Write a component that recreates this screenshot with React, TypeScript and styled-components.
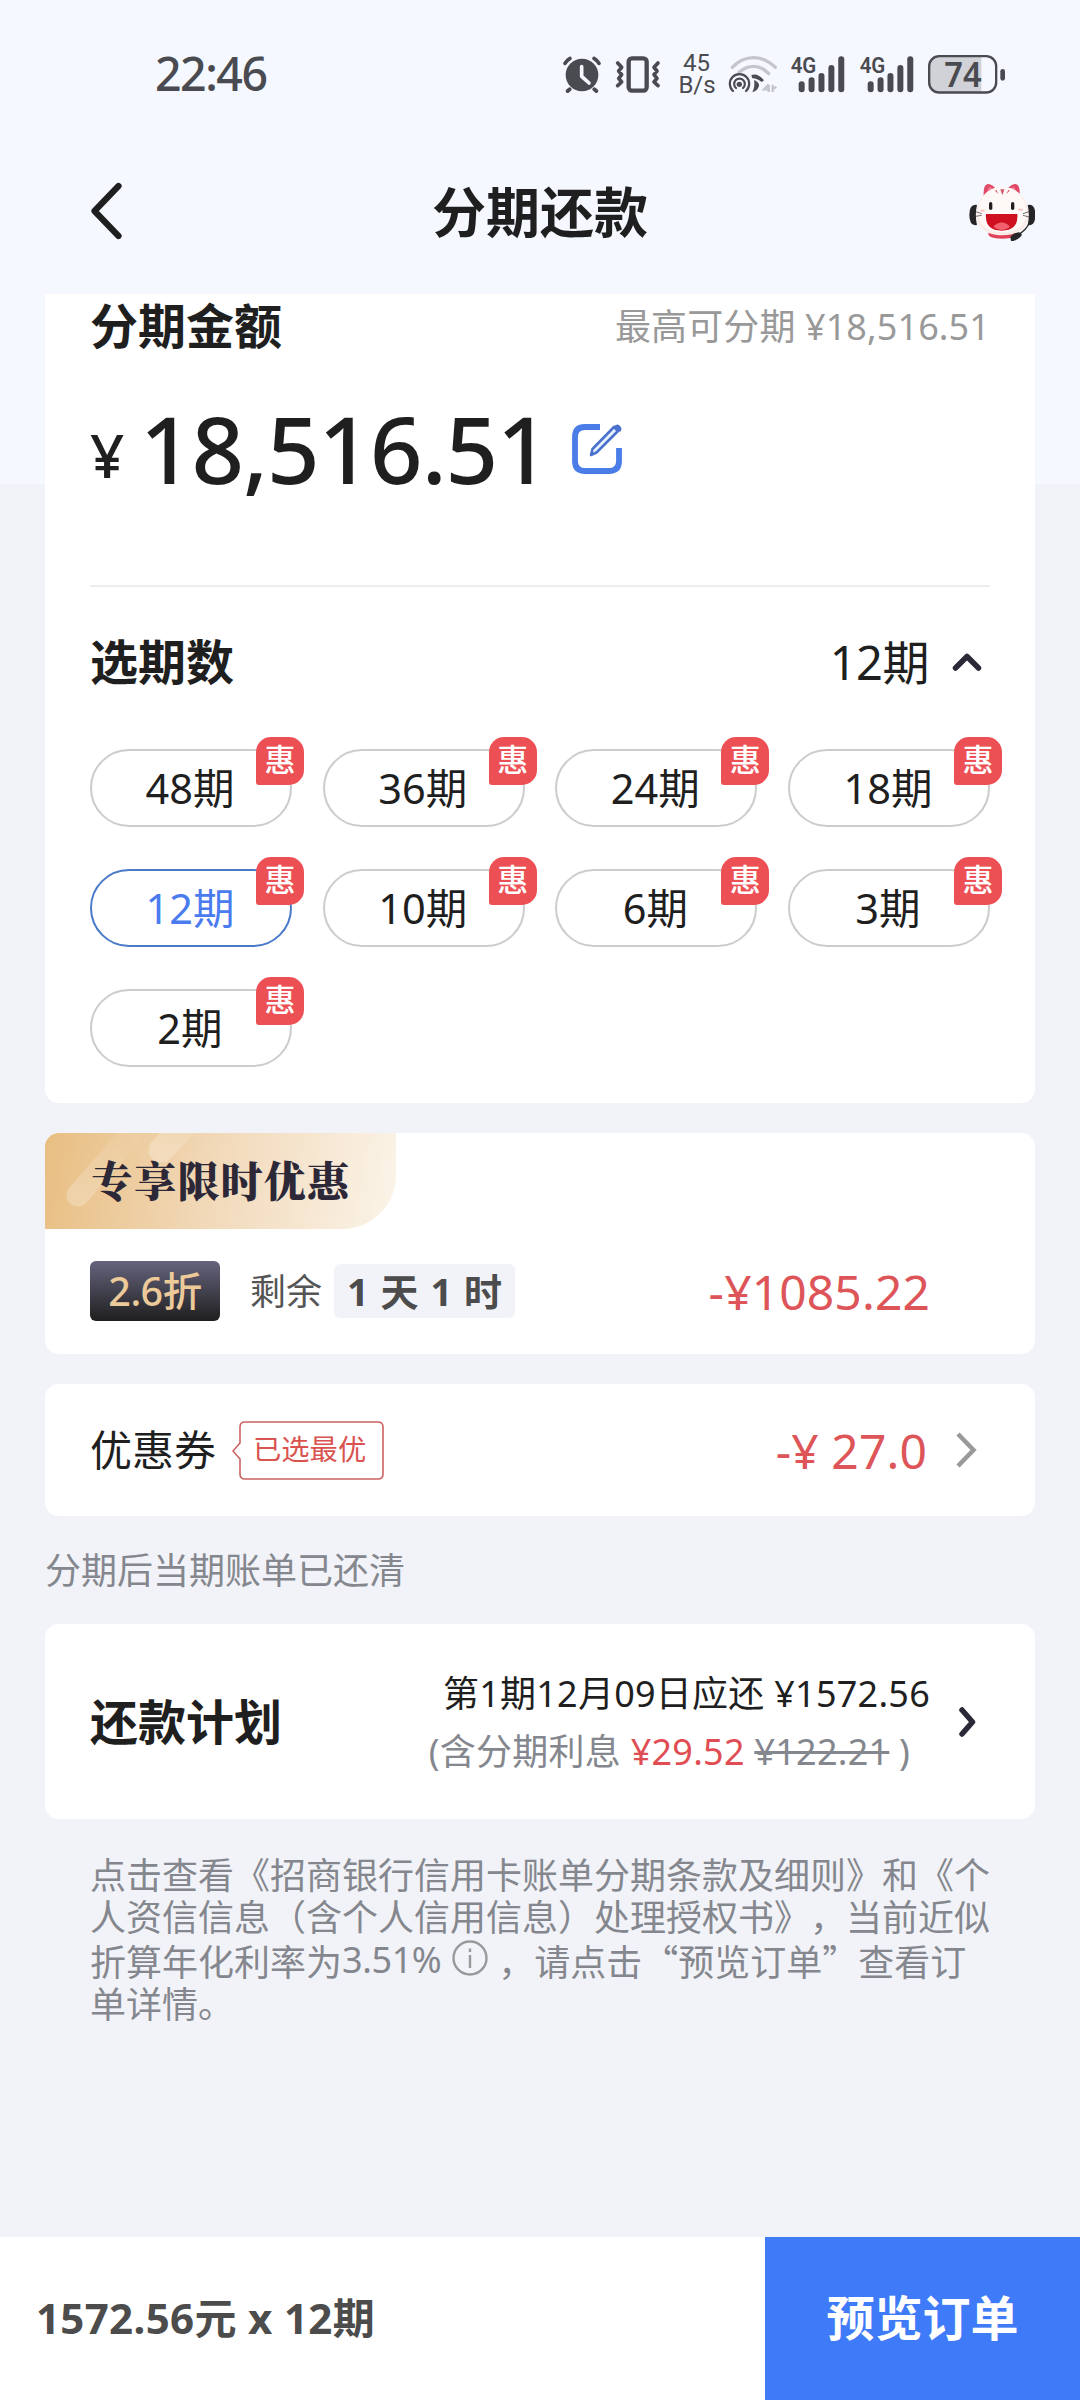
import React from "react";
import styled, { createGlobalStyle } from "styled-components";

const Global = createGlobalStyle`
  * { box-sizing: border-box; }
  body {
    margin: 0;
    font-family: "Noto Sans", "Noto Sans CJK SC", sans-serif;
    line-height: 1.25;
    color: #1f1f1f;
  }
`;

const Page = styled.div`
  width: 1080px;
  height: 2400px;
  display: flex;
  flex-direction: column;
  overflow: hidden;
  background: linear-gradient(#f5f8ff 0 484px, #f2f3f8 484px);
`;

/* ---------- status bar ---------- */

const StatusBar = styled.div`
  height: 148px;
  padding: 0 74px 0 155px;
  display: flex;
  align-items: center;
  justify-content: space-between;
  color: #4a4b50;
`;

const Clock = styled.span`
  padding-bottom: 2px;
  font-size: 46.500px;
  font-weight: 500;
  letter-spacing: -1.500px;
`;

const StatusIcons = styled.div`
  display: flex;
  align-items: center;
`;

const StatusSvg = styled.svg<{ $gap: number }>`
  display: block;
  overflow: visible;
  margin-left: ${(p) => p.$gap}px;
`;

const NetSpeed = styled.div`
  width: 36px;
  margin-left: 18px;
  font: 400 24px/22px Roboto, sans-serif;
  text-align: center;
  white-space: nowrap;
`;

const INK = "#4a4b50";

const Alarm = () => (
  <StatusSvg $gap={0} width="38" height="37" viewBox="68 74 114 111">
    <circle cx="125" cy="131" r="49" fill={INK} />
    <path d="M88 174l-6 5M162 174l6 5" stroke={INK} strokeWidth="12" strokeLinecap="round" />
    <path d="M74 96q5-9 15-15M176 96q-5-9-15-15" stroke={INK} strokeWidth="11" fill="none" strokeLinecap="round" />
    <path d="M124 106v29l22 20" stroke="#f5f8ff" strokeWidth="11" fill="none" strokeLinecap="round" strokeLinejoin="round" />
  </StatusSvg>
);

const Vibrate = () => (
  <StatusSvg $gap={15} width="44" height="37" viewBox="227 74 132 111">
    <rect x="265" y="81" width="54" height="97" rx="10" fill="none" stroke={INK} strokeWidth="13" />
    <path
      d="M232 95l12 13-9 11 9 11-9 11 9 11-12 11M353 95l-12 13 9 11-9 11 9 11-9 11 12 11"
      stroke={INK} strokeWidth="11" fill="none" strokeLinecap="round" strokeLinejoin="round"
    />
  </StatusSvg>
);

const Hotspot = () => (
  <StatusSvg $gap={14.5} width="48" height="37" viewBox="569 74 144 111">
    <g fill="none" strokeLinecap="round">
      <path d="M579 108q28-29 64-29t65 29" stroke="#c4c6cc" strokeWidth="10" />
      <path d="M599 123q20-18 44-18t45 22" stroke="#c4c6cc" strokeWidth="10" />
      <path d="M581 179a29 29 0 1 1 39 0" stroke={INK} strokeWidth="6.500" />
      <path d="M590 170a16 16 0 1 1 21 0" stroke={INK} strokeWidth="6.500" />
    </g>
    <circle cx="600" cy="159" r="8" fill={INK} />
    <path d="M636 131q20-6 38 16l-7 5q-16-12-28-11z" fill={INK} />
    <path d="M644 146q17 8 15 18-4 14-20 19 9-18 5-37z" fill={INK} />
    <path d="M688 160v22M688 160l-14 14h18M700 160v22M711 166l-11 8" stroke="#c4c6cc" strokeWidth="7" fill="none" />
  </StatusSvg>
);

const Signal = () => (
  <StatusSvg $gap={14.3} width="54" height="37" viewBox="757 74 162 111">
    {[150, 138, 125, 101, 75].map((top, i) => (
      <rect key={top} x={780 + i * 29.7} y={top} width="18" height={183 - top} rx="9" fill={INK} />
    ))}
    <text x="756" y="126" fontSize="68" fontWeight="600" fontFamily="Roboto" fill={INK} textLength="77" lengthAdjust="spacingAndGlyphs">
      4G
    </text>
  </StatusSvg>
);

const Battery = () => (
  <StatusSvg $gap={14.5} width="78" height="39" viewBox="1166 70 234 117">
    <path d="M1200 74h126v108h-126q-30 0-30-30v-48q0-30 30-30z" fill="#d0d2d8" />
    <rect x="1169.500" y="73.500" width="201" height="109" rx="30" fill="none" stroke={INK} strokeWidth="7" />
    <rect x="1383" y="112" width="14" height="35" rx="7" fill={INK} />
    <text x="1271" y="165" textAnchor="middle" fontSize="100" fontWeight="600" fontFamily="Noto Sans" fill={INK} textLength="112" lengthAdjust="spacingAndGlyphs">
      74
    </text>
  </StatusSvg>
);

/* ---------- title bar ---------- */

const TitleBar = styled.header`
  height: 128px;
  margin-bottom: 18px;
  padding: 0 45px 0 90px;
  display: grid;
  grid-template-columns: 66px 1fr 66px;
  align-items: center;
`;

const BackIcon = styled.svg`
  margin-bottom: 2px;
`;

const Title = styled.h1`
  margin: 0;
  padding-right: 45px;
  font-size: 54px;
  font-weight: 700;
  line-height: 70px;
  text-align: center;
`;

const Mascot = () => (
  <svg width="66" height="58" viewBox="0 0 198 174">
    <path d="M44 38q-2-32 12-35 12-2 28 18zM152 38q2-32-12-35-12-2-28 18z" fill="#e04a66" />
    <path d="M54 34q2-20 8-22 6 0 12 12zM142 34q-2-20-8-22-6 0-12 12z" fill="#f27a90" />
    <path d="M58 150h84q2 17-42 17t-42-17z" fill="#e04058" />
    <path d="M100 12c48 0 77 38 79 82 2 40-32 63-79 63s-79-23-77-63c2-44 29-82 77-82z" fill="#fbece8" />
    <path d="M100 12c46 0 70 36 72 76 2 38-30 60-72 60s-74-22-72-60c2-40 26-76 72-76z" fill="#fef8f6" />
    <path d="M94 19h12l-6 18zM78 23l4-2 6 12zM122 23l-4-2-6 12z" fill="#d65067" />
    <rect x="60" y="57" width="10" height="24" rx="5" fill="#221f20" />
    <rect x="126" y="57" width="10" height="24" rx="5" fill="#221f20" />
    <path d="M51 93h94q4 50-47 50T51 93z" fill="#cf1020" />
    <path d="M73 131q25-25 50 0-25 21-50 0z" fill="#f4606e" />
    <path d="M34 83h13M148 80h13" stroke="#f8c0bc" strokeWidth="5" />
    <path d="M20 86l18 6M20 100l18-3M162 92l18-6M162 97l18 5" stroke="#55504f" strokeWidth="2.500" />
    <path d="M24 66q-23-4-23 30t23 30q-7-30 0-60zM176 66q23-4 23 30t-23 30q7-30 0-60z" fill="#262626" />
    <path d="M182 118q-10 24-36 38" stroke="#262626" strokeWidth="4" fill="none" />
    <path d="M124 162q10-14 26-14 14 4 4 14-16 14-28 12z" fill="#262626" />
  </svg>
);

/* ---------- cards ---------- */

const Content = styled.main`
  padding: 0 45px;
  display: flex;
  flex-direction: column;
`;

const Card = styled.section<{ $height: number; $flatTop?: boolean; $row?: boolean }>`
  height: ${(p) => p.$height}px;
  padding: 0 45px;
  border-radius: ${(p) => (p.$flatTop ? "0 0 14px 14px" : "14px")};
  background: #fff;
  display: flex;
  flex-direction: ${(p) => (p.$row ? "row" : "column")};
  ${(p) => p.$row && "align-items: center;"}
  & + & { margin-top: 30px; }
`;

const Row = styled.div<{ $top?: number; $height: number }>`
  height: ${(p) => p.$height}px;
  margin-top: ${(p) => p.$top ?? 0}px;
  flex: none;
  display: flex;
  align-items: center;
`;

const Heading = styled.h2`
  margin: 0;
  font-size: 48px;
  font-weight: 700;
  line-height: 60px;
`;

const Spacer = styled.div`
  flex: 1;
`;

const Limit = styled.span`
  font-size: 36px;
  letter-spacing: 0.100px;
  color: #999;
`;

const Yen = styled.span`
  width: 50px;
  padding-top: 13px;
  font-size: 60px;
  font-weight: 500;
  line-height: 87px;
`;

const Amount = styled.span`
  font-size: 92px;
  font-weight: 500;
  line-height: 100px;
  letter-spacing: -1.100px;
`;

const EditIcon = styled.svg`
  margin-left: auto;
  margin-right: 368px;
`;

const Divider = styled.hr`
  width: 100%;
  height: 2px;
  margin: 86px 0 0;
  border: 0;
  background: #eee;
`;

const Selected = styled.span`
  margin-right: 23px;
  font-size: 47px;
  line-height: 60px;
  letter-spacing: -0.500px;
`;

const Terms = styled.div`
  margin-top: 57px;
  display: grid;
  grid-template-columns: repeat(4, 202px);
  justify-content: space-between;
  row-gap: 42px;
`;

const Term = styled.button<{ $active: boolean }>`
  position: relative;
  height: 78px;
  padding: 0 2px 0 0;
  border: 2px solid ${(p) => (p.$active ? "#4a7ac8" : "#ccc")};
  border-radius: 39px;
  background: #fff;
  color: ${(p) => (p.$active ? "#4a7cf0" : "#1f1f1f")};
  font-family: inherit;
  font-size: 41.500px;
  line-height: 74px;
`;

const Perk = styled.span`
  position: absolute;
  top: -14px;
  right: -14px;
  width: 48px;
  height: 48px;
  border-radius: 15px 15px 15px 3px;
  background: #ec5054;
  color: #fff;
  font-size: 31px;
  font-weight: 500;
  line-height: 44px;
  text-align: center;
`;

/* ---------- limited offer ---------- */

const Ribbon = styled.div`
  position: relative;
  width: 351px;
  height: 96px;
  margin-left: -45px;
  flex: none;
  padding-left: 46px;
  border-radius: 14px 0 54px 0;
  background: linear-gradient(100deg, #e8be82, #f2dabb 50%, #fbf4e9);
  overflow: hidden;
  color: #2d2838;
  font-family: "Noto Serif CJK SC", "Source Han Serif SC", "Noto Sans CJK SC", serif;
  font-size: 42px;
  font-weight: 900;
  line-height: 92px;
  letter-spacing: 1.200px;
  white-space: nowrap;
`;

const Glow = styled.svg`
  position: absolute;
  left: 0;
  top: 0;
`;

const RibbonText = styled.span`
  position: relative;
`;

const Discount = styled.span`
  width: 130px;
  height: 60px;
  border-radius: 6px;
  background: linear-gradient(#66647e, #1f1f1f);
  color: #ecca9a;
  font-size: 39.500px;
  font-weight: 500;
  line-height: 61px;
  text-align: center;
  letter-spacing: -0.500px;
`;

const Remain = styled.span`
  margin-left: 30px;
  font-size: 36px;
  color: #555;
`;

const Countdown = styled.span`
  width: 181px;
  height: 54px;
  margin-left: 12px;
  border-radius: 6px;
  background: #f2f3f8;
  color: #4c4c4c;
  font-size: 38px;
  font-weight: 700;
  line-height: 55px;
  text-align: center;
  word-spacing: 2px;
`;

const Minus = styled.span<{ $right: number }>`
  margin-right: ${(p) => p.$right}px;
  padding-top: 1px;
  color: #dd5559;
  font-size: 48px;
  line-height: 60px;
  letter-spacing: 0.100px;
  white-space: pre;
`;

/* ---------- coupon ---------- */

const CouponLabel = styled.span`
  font-size: 42px;
`;

const Tag = styled.span`
  position: relative;
  width: 152px;
  height: 59px;
  margin-left: 16px;
  padding-left: 21px;
  color: #d9534f;
  font-size: 28.300px;
  line-height: 57px;
`;

const TagOutline = styled.svg`
  position: absolute;
  inset: 0;
`;

const Note = styled.p`
  margin: 28px 0 26px;
  font-size: 36px;
  line-height: 54px;
  color: #85878e;
`;

/* ---------- plan ---------- */

const PlanDetail = styled.div`
  margin-right: 29px;
  padding-top: 2px;
  display: flex;
  flex-direction: column;
  font-size: 36px;
  line-height: 58px;
  letter-spacing: 0.250px;
  white-space: pre;
`;

const PlanLine = styled.div<{ $muted?: boolean }>`
  color: ${(p) => (p.$muted ? "#85878e" : "#1f1f1f")};
  text-align: right;
  ${(p) => p.$muted && "padding-right: 20px;"}
`;

const Red = styled.span`
  color: #e04e54;
`;

const Strike = styled.s`
  text-decoration-thickness: 3px;
`;

/* ---------- terms text ---------- */

const Legal = styled.p`
  margin: 33px 0 0 45px;
  font-family: "Noto Sans CJK SC", sans-serif;
  font-size: 36px;
  color: #85878e;
  text-spacing-trim: space-all;
`;

const LegalLine = styled.span<{ $tall?: boolean }>`
  display: flex;
  align-items: center;
  height: ${(p) => (p.$tall ? 45 : 42)}px;
  padding-top: ${(p) => (p.$tall ? 2 : 0)}px;
  line-height: 42px;
  white-space: nowrap;
`;

const Rate = styled.span`
  font-family: "Noto Sans", sans-serif;
  letter-spacing: -0.400px;
`;

const InfoIcon = styled.svg`
  margin: 0 10px 4px 11px;
`;

/* ---------- bottom bar ---------- */

const BottomBar = styled.footer`
  height: 163px;
  margin-top: auto;
  display: flex;
  align-items: center;
  background: #fff;
`;

const Summary = styled.span`
  flex: 1;
  padding-left: 36px;
  color: #4c4c4c;
  font-size: 42px;
  font-weight: 700;
  letter-spacing: 0.350px;
`;

const Submit = styled.button`
  width: 315px;
  height: 100%;
  padding: 0 0 2px;
  border: 0;
  background: #3f7af8;
  color: #fff;
  font-family: inherit;
  font-size: 48px;
  font-weight: 700;
  line-height: 60px;
`;

const TERMS = [48, 36, 24, 18, 12, 10, 6, 3, 2];

export default function App() {
  return (
    <Page>
      <Global />
      <StatusBar>
        <Clock>22:46</Clock>
        <StatusIcons>
          <Alarm />
          <Vibrate />
          <NetSpeed>
            45
            <br />
            B/s
          </NetSpeed>
          <Hotspot />
          <Signal />
          <Signal />
          <Battery />
        </StatusIcons>
      </StatusBar>

      <TitleBar>
        <BackIcon width="34" height="58" viewBox="0 0 34 58">
          <path d="M28.500 4L4.500 29l24 25" fill="none" stroke="#1f1f1f" strokeWidth="6.200" strokeLinecap="round" strokeLinejoin="round" />
        </BackIcon>
        <Title>分期还款</Title>
        <Mascot />
      </TitleBar>

      <Content>
        <Card $height={809} $flatTop>
          <Row $height={64}>
            <Heading>分期金额</Heading>
            <Spacer />
            <Limit>最高可分期 ¥18,516.51</Limit>
          </Row>
          <Row $height={100} $top={41}>
            <Yen>¥</Yen>
            <Amount>18,516.51</Amount>
            <EditIcon width="50" height="50" viewBox="0 0 50 50" fill="none">
              <path d="M28 3H13Q3 3 3 13v24q0 10 10 10h24q10 0 10-10V24" stroke="#4a7de8" strokeWidth="5.800" />
              <path d="M20.500 25L19 31l5.500-2.500L46 7l-4-4z" stroke="#4a72cc" strokeWidth="2.600" strokeLinejoin="round" fill="#eaf4ff" />
              <path d="M42 2q4-3 6 0 3 3 0 6z" fill="#4a72cc" />
            </EditIcon>
          </Row>
          <Divider />
          <Row $height={60} $top={45}>
            <Heading>选期数</Heading>
            <Spacer />
            <Selected>12期</Selected>
            <svg width="38" height="20" viewBox="0 0 38 20">
              <path d="M3.500 16L15 4.500 26.500 16" fill="none" stroke="#2b2838" strokeWidth="5.500" strokeLinecap="round" strokeLinejoin="round" />
            </svg>
          </Row>
          <Terms>
            {TERMS.map((n) => (
              <Term key={n} $active={n === 12}>
                {n}期<Perk>惠</Perk>
              </Term>
            ))}
          </Terms>
        </Card>

        <Card $height={221}>
          <Ribbon>
            <Glow width="351" height="96">
              <defs>
                <linearGradient id="streak" x1="0" y1="1" x2="1" y2="0">
                  <stop offset="0" stopColor="#fff" stopOpacity="0.24" />
                  <stop offset="1" stopColor="#fff" stopOpacity="0.04" />
                </linearGradient>
              </defs>
              <path d="M33 62L84 4" stroke="url(#streak)" strokeWidth="23" strokeLinecap="round" />
              <path d="M116 17L146-14" stroke="url(#streak)" strokeWidth="25" strokeLinecap="round" />
            </Glow>
            <RibbonText>专享限时优惠</RibbonText>
          </Ribbon>
          <Row $height={60} $top={32}>
            <Discount>2.6折</Discount>
            <Remain>剩余</Remain>
            <Countdown>1 天 1 时</Countdown>
            <Spacer />
            <Minus $right={60}>-¥1085.22</Minus>
          </Row>
        </Card>

        <Card $height={132} $row>
          <CouponLabel>优惠券</CouponLabel>
          <Tag>
            <TagOutline width="152" height="59" fill="none">
              <path d="M13 1h133q5 0 5 5v47q0 5-5 5H13q-5 0-5-5V38L1 30l7-8V6q0-5 5-5z" stroke="#cc6262" strokeWidth="1.600" />
            </TagOutline>
            已选最优
          </Tag>
          <Spacer />
          <Minus $right={28}>-¥ 27.0</Minus>
          <svg width="35" height="36" viewBox="0 0 35 36">
            <path d="M3 2l15.500 16L3 34" fill="none" stroke="#999" strokeWidth="4.500" />
          </svg>
        </Card>

        <Note>分期后当期账单已还清</Note>

        <Card $height={195} $row>
          <Heading>还款计划</Heading>
          <Spacer />
          <PlanDetail>
            <PlanLine>第1期12月09日应还 ¥1572.56</PlanLine>
            <PlanLine $muted>
              (含分期利息 <Red>¥29.52</Red> <Strike>¥122.21</Strike> )
            </PlanLine>
          </PlanDetail>
          <svg width="31" height="30" viewBox="0 0 31 30">
            <path d="M3 3l10.500 12L3 27" fill="none" stroke="#2b2838" strokeWidth="5.500" strokeLinecap="round" strokeLinejoin="round" />
          </svg>
        </Card>

        <Legal>
          <LegalLine>点击查看《招商银行信用卡账单分期条款及细则》和《个</LegalLine>
          <LegalLine>人资信信息（含个人信用信息）处理授权书》，当前近似</LegalLine>
          <LegalLine $tall>
            折算年化利率为<Rate>3.51%</Rate>
            <InfoIcon width="36" height="36" viewBox="0 0 36 36" fill="none" stroke="#999" strokeWidth="2.400">
              <circle cx="18" cy="18" r="16.500" />
              <path d="M18 15v13M18 8.500v3.500" />
            </InfoIcon>
            ，请点击“预览订单”查看订
          </LegalLine>
          <LegalLine>单详情。</LegalLine>
        </Legal>
      </Content>

      <BottomBar>
        <Summary>1572.56元 x 12期</Summary>
        <Submit>预览订单</Submit>
      </BottomBar>
    </Page>
  );
}
